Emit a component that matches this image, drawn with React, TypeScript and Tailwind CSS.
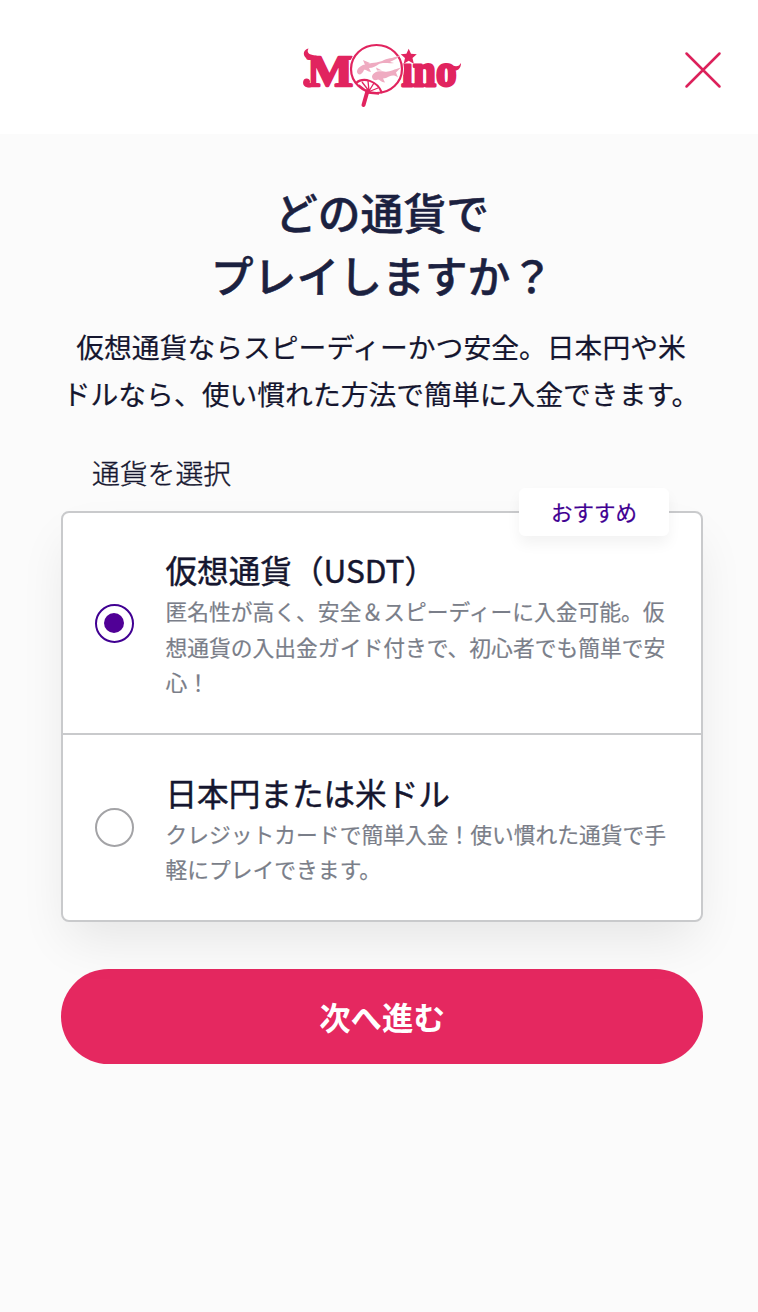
import { useState } from "react";

const options = [
  {
    id: "crypto",
    title: "仮想通貨（USDT）",
    lines: ["匿名性が高く、安全＆スピーディーに入金可能。仮", "想通貨の入出金ガイド付きで、初心者でも簡単で安", "心！"],
    row: "h-[220px]",
  },
  {
    id: "fiat",
    title: "日本円または米ドル",
    lines: ["クレジットカードで簡単入金！使い慣れた通貨で手", "軽にプレイできます。"],
    row: "h-[187px] border-t-2 border-[#c9cacc]",
  },
];

function Logo() {
  return (
    <svg width="164" height="70" viewBox="300 40 164 70" role="img" aria-label="Moino">
      <g fill="#e1245f" stroke="#e1245f" fontFamily="'Liberation Serif', serif" fontWeight="700" strokeLinejoin="round">
        <text x="307" y="85.500" fontSize="44" textLength="46" lengthAdjust="spacingAndGlyphs" strokeWidth="2.400">M</text>
        <text x="401.500" y="85.500" fontSize="46" textLength="55" lengthAdjust="spacingAndGlyphs" strokeWidth="2.800">ıno</text>
      </g>
      <g fill="#e1245f">
        <path d="M308.500 48.500c-5 1-6 6-3 9 2 2 4 2 7 2h4v-4c-5 0-11-2-8-7Z" />
        <path d="M304 79.500c2-2 6-1 6 2 0 2-1 3-2 3 4 0 5-3 5-7h3c0 6-2 10-7 10-6 0-7-5-5-8Z" />
        <path d="M450 64.500c4 2 7 2 9 1l2-2.500c0 6-4 9-9 7Z" />
        <path d="m408.700 48.700 2.300 5.100 5.800.5-4.300 3.800 1.300 5.600-5.100-3-5 3 1.300-5.600-4.300-3.800 5.700-.5Z" />
      </g>
      <ellipse cx="376.500" cy="69" rx="27.500" ry="25.500" fill="white" />
      <ellipse cx="376.500" cy="69" rx="25.500" ry="24" fill="white" stroke="#e1245f" strokeWidth="2.200" />
      <g fill="#efabc1">
        <path d="M357 72c0-4 4-7 10-8 7-2 12-1 17-4 5-2 11-2 16-5-2 4-7 5-10 7l4 1c-6 1-10-1-15 1-3 2-6 4-10 4l2 4c-4 0-5-3-7-2-2 5-6 6-7 2Zm6-12 7 3-5 2Z" />
        <path d="M372 76.500c1-4 5-6 12-5 6 1 9-2 17-4l-5 5 2 5c-4-3-6-2-9-1-2 1-4 2-6 2l2 4c-4 0-5-3-7-3-3 2-6 0-6-3Zm5-6-1-3 6 3Z" />
      </g>
      <g fill="none" stroke="#e1245f" strokeWidth="2.100">
        <path d="M356 83c7-6 21-3 26 10" />
        <path d="m369 91-7-9m7 9-1-10m1 10 5-8m-6 9 10-4m-10 5 11 1M359 85l9 7" strokeWidth="1.300" />
        <path d="m367.500 91-4 14" strokeWidth="4" strokeLinecap="round" />
      </g>
    </svg>
  );
}

export default function App() {
  const [selected, setSelected] = useState("crypto");
  return (
    <div className="flex min-h-[1312px] w-[758px] flex-col bg-[#fbfbfb] font-['Noto_Sans_CJK_JP',sans-serif] text-[#15162f]">
      <header className="grid h-[134px] grid-cols-[1fr_164px_1fr] items-center bg-white pl-[6px] pb-px">
        <span />
        <div className="pt-4"><Logo /></div>
        <button aria-label="閉じる" className="mr-[36px] justify-self-end pt-[6px]">
          <svg width="38" height="38" viewBox="0 0 38 38" fill="none" stroke="#dc215b" strokeWidth="2.500" strokeLinecap="round">
            <path d="m2.500 2.500 33 33m0-33-33 33" />
          </svg>
        </button>
      </header>
      <main className="flex flex-col px-[61px] pt-[46px] pr-[55px]">
        <h1 className="text-center text-[42.800px] leading-[63px] font-medium whitespace-nowrap text-[#1b2140] [-webkit-text-stroke:0.500px_#1b2140]">
          どの通貨で<br />プレイしますか？
        </h1>
        <p className="mt-[17px] -ml-[2px] text-center text-[27.800px] leading-[47px] font-normal whitespace-nowrap [-webkit-text-stroke:0.200px_#15162f]">
          仮想通貨ならスピーディーかつ安全。日本円や米<br />ドルなら、使い慣れた方法で簡単に入金できます。
        </p>
        <h2 className="mt-[33px] pl-[31px] text-[27.800px] leading-[44px] font-light [-webkit-text-stroke:0.400px_#15162f]">通貨を選択</h2>
        <section className="relative mt-[17px] w-[642px] rounded-[8px] border-2 border-[#c9cacc] bg-white shadow-[0_24px_48px_-8px_rgba(0,0,0,0.090)]">
          <span className="absolute -top-[25px] right-[32px] flex h-[48px] w-[150px] items-center justify-center rounded-[6px] bg-white text-[21.500px] text-[#400092] shadow-[0_8px_14px_rgba(0,0,0,0.050)] [-webkit-text-stroke:0.200px_#400092]">
            おすすめ
          </span>
          {options.map((option) => (
            <label key={option.id} className={`flex items-center pl-[31.5px] ${option.row}`}>
              <input type="radio" name="currency" className="sr-only" checked={selected === option.id} onChange={() => setSelected(option.id)} />
              <span className={`flex size-[39px] shrink-0 items-center justify-center rounded-full border-2 ${selected === option.id ? "border-[#400092]" : "border-[#a3a3a6]"}`}>
                {selected === option.id && <span className="size-[20px] rounded-full bg-[#500096]" />}
              </span>
              <span className="ml-[32px] flex flex-col whitespace-nowrap">
                <span className="mb-px text-[31.600px] leading-[46px] font-normal [-webkit-text-stroke:0.450px_#15162f]">{option.title}</span>
                <span className="text-[21.780px] leading-[35.500px] text-[#7a7e89] [-webkit-text-stroke:0.200px_#7a7e89]">
                  {option.lines.map((line) => <span key={line} className="block">{line}</span>)}
                </span>
              </span>
            </label>
          ))}
        </section>
        <button className="mt-[47px] h-[95px] w-[642px] rounded-full bg-[#e52860] text-[31.400px] font-bold text-white">次へ進む</button>
      </main>
    </div>
  );
}
